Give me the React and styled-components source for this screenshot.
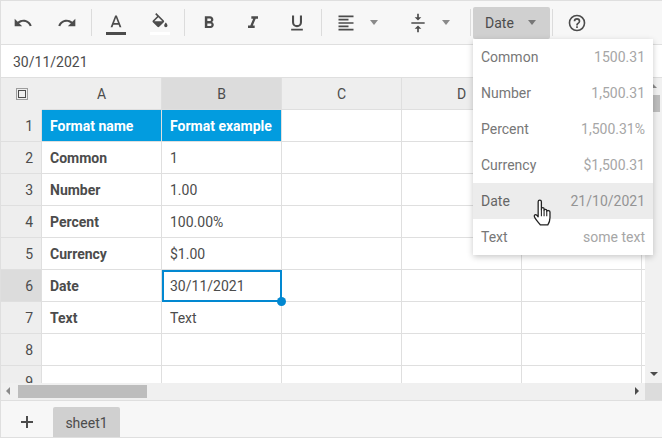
import React from 'react';
import styled, { createGlobalStyle } from 'styled-components';

const GlobalStyle = createGlobalStyle`
  html, body {
    margin: 0;
    padding: 0;
    background: #fff;
  }
  * {
    box-sizing: border-box;
  }
`;

const LINE = '#dfdfdf';
const TEXT = '#4c4c4c';

const Page = styled.div`
  position: relative;
  width: 662px;
  height: 438px;
  display: flex;
  flex-direction: column;
  overflow: hidden;
  border-top: 1px solid ${LINE};
  border-left: 1px solid ${LINE};
  border-bottom: 1px solid ${LINE};
  font-family: Roboto, "Liberation Sans", sans-serif;
  font-size: 14px;
  color: ${TEXT};
`;

const Toolbar = styled.div`
  flex: none;
  height: 44px;
  display: flex;
  align-items: center;
  background: #f7f7f7;
  border-bottom: 1px solid ${LINE};
`;

const Separator = styled.div`
  width: 1px;
  height: 27px;
  margin: 0 2px;
  background: #dcdcdc;
`;

const ToolButton = styled.div`
  position: relative;
  flex: none;
  width: 44px;
  height: 43px;
  display: flex;
  align-items: center;
  justify-content: center;
`;

const DropButton = styled.div`
  flex: none;
  height: 43px;
  display: flex;
  align-items: center;
  gap: 14px;
  margin-left: ${(p) => p.$offset || 0}px;
  padding: 0 ${(p) => p.$right}px 0 12px;
`;

const Caret = styled.span`
  flex: none;
  width: 0;
  height: 0;
  border-left: 4px solid transparent;
  border-right: 4px solid transparent;
  border-top: 5px solid ${(p) => p.$color || '#8a8a8a'};
`;

const FormatButton = styled.div`
  flex: none;
  width: 77px;
  height: 32px;
  padding: 0 14px 0 12px;
  display: flex;
  align-items: center;
  justify-content: space-between;
  background: #d0d0d0;
  border-radius: 2px;
`;

const ColorBar = styled.span`
  position: absolute;
  left: 12px;
  top: 31px;
  width: 20px;
  height: 3px;
  background: ${(p) => p.$color};
`;

const FormulaBar = styled.div`
  flex: none;
  height: 33px;
  padding: 1px 12px 0;
  display: flex;
  align-items: center;
  background: #fff;
  border-bottom: 1px solid ${LINE};
`;

const Sheet = styled.div`
  flex: none;
  height: 323px;
  display: flex;
  flex-direction: column;
  border-bottom: 1px solid ${LINE};
`;

const SheetMain = styled.div`
  flex: none;
  height: 305px;
  display: flex;
`;

const Grid = styled.div`
  flex: 1;
  min-width: 0;
  overflow: hidden;
  display: grid;
  grid-template-columns: 41px repeat(6, 120px);
  grid-auto-rows: 32px;
  align-content: start;
`;

const Corner = styled.div`
  display: flex;
  align-items: center;
  justify-content: center;
  padding-bottom: 1px;
  background: #eeeeee;
`;

const ColHeader = styled.div`
  display: flex;
  align-items: center;
  justify-content: center;
  background: ${(p) => (p.$active ? '#dcdcdc' : '#eeeeee')};
  border-right: 1px solid ${LINE};
  border-bottom: 1px solid ${LINE};
`;

const RowHeader = styled.div`
  display: flex;
  align-items: center;
  justify-content: flex-end;
  padding-right: 8px;
  background: ${(p) => (p.$active ? '#dcdcdc' : '#eeeeee')};
  border-right: 1px solid ${LINE};
  border-bottom: 1px solid ${LINE};
`;

const Cell = styled.div`
  position: relative;
  display: flex;
  align-items: center;
  padding: 0 8px;
  white-space: nowrap;
  border-right: 1px solid ${LINE};
  border-bottom: 1px solid ${LINE};
  font-weight: ${(p) => (p.$bold || p.$head ? 700 : 400)};
  background: ${(p) => (p.$head ? '#029cdf' : '#fff')};
  color: ${(p) => (p.$head ? '#fff' : TEXT)};
`;

const SelectionFrame = styled.span`
  position: absolute;
  inset: 0 -1px -1px 0;
  border: 2px solid #0288d1;
  pointer-events: none;
`;

const SelectionHandle = styled.span`
  position: absolute;
  right: -5px;
  bottom: -5px;
  z-index: 2;
  width: 9px;
  height: 9px;
  border-radius: 50%;
  background: #0288d1;
`;

const VScroll = styled.div`
  position: relative;
  flex: none;
  width: 17px;
  background: #f1f1f1;
`;

const VThumb = styled.div`
  position: absolute;
  left: 1px;
  top: 17px;
  width: 14px;
  height: 17px;
  background: #bdbdbd;
`;

const HScroll = styled.div`
  flex: none;
  height: 17px;
  display: flex;
  background: #f0f0f0;
`;

const HTrack = styled.div`
  position: relative;
  flex: 1;
`;

const HThumb = styled.div`
  position: absolute;
  left: 17px;
  top: 2px;
  width: 129px;
  height: 13px;
  background: #bdbdbd;
`;

const ScrollCorner = styled.div`
  flex: none;
  width: 17px;
  background: #dcdcdc;
`;

const Arrow = styled.span`
  position: absolute;
  width: 0;
  height: 0;
  ${(p) => p.$at}
`;

const TabBar = styled.div`
  flex: 1;
  display: flex;
  align-items: flex-end;
  background: #f7f7f7;
`;

const AddTab = styled.div`
  flex: none;
  width: 52px;
  height: 30px;
  display: flex;
  align-items: center;
  justify-content: center;
`;

const Tab = styled.div`
  flex: none;
  width: 67px;
  height: 30px;
  padding-top: 2px;
  display: flex;
  align-items: center;
  justify-content: center;
  background: #d0d0d0;
  border-radius: 2px 2px 0 0;
`;

const Menu = styled.div`
  position: absolute;
  left: 472px;
  top: 38px;
  z-index: 5;
  width: 180px;
  background: #fff;
  border-radius: 2px;
  box-shadow: 0 2px 6px rgba(0, 0, 0, 0.22);
`;

const MenuItem = styled.div`
  height: 36px;
  padding: 0 8px;
  display: flex;
  align-items: center;
  justify-content: space-between;
  color: ${(p) => (p.$active ? '#666666' : '#777777')};
  background: ${(p) => (p.$active ? '#ececec' : '#fff')};
`;

const MenuValue = styled.span`
  color: ${(p) => (p.$active ? '#949494' : '#a6a6a6')};
`;

const HandCursor = styled.svg`
  position: absolute;
  left: 531px;
  top: 197px;
  z-index: 6;
`;

const ICONS = {
  undo: 'M12.5,8C9.85,8 7.45,9 5.6,10.6L2,7V16H11L7.38,12.38C8.77,11.22 10.54,10.5 12.5,10.5C16.04,10.5 19.05,12.81 20.1,16L22.47,15.22C21.08,11.03 17.15,8 12.5,8Z',
  redo: 'M18.4,10.6C16.55,9 14.15,8 11.5,8C6.85,8 2.92,11.03 1.54,15.22L3.9,16C4.95,12.81 7.95,10.5 11.5,10.5C13.45,10.5 15.23,11.22 16.62,12.38L13,16H22V7L18.4,10.6Z',
  color: 'M9.62,12L12,5.67L14.38,12M11,3L5.5,17H7.75L8.87,14H15.12L16.25,17H18.5L13,3H11Z',
  fill: 'M19,11.5C19,11.5 17,13.67 17,15A2,2 0 0,0 19,17A2,2 0 0,0 21,15C21,13.67 19,11.5 19,11.5M5.21,10L10,5.21L14.79,10M16.56,8.94L7.62,0L6.21,1.41L8.59,3.79L3.44,8.94C2.85,9.5 2.85,10.47 3.44,11.06L8.94,16.56C9.23,16.85 9.62,17 10,17C10.38,17 10.77,16.85 11.06,16.56L16.56,11.06C17.15,10.47 17.15,9.5 16.56,8.94Z',
  bold: 'M13.5,15.5H10V12.5H13.5A1.5,1.5 0 0,1 15,14A1.5,1.5 0 0,1 13.5,15.5M10,6.5H13A1.5,1.5 0 0,1 14.5,8A1.5,1.5 0 0,1 13,9.5H10M15.6,10.79C16.57,10.11 17.25,9 17.25,8C17.25,5.74 15.5,4 13.25,4H7V18H14.04C16.14,18 17.75,16.3 17.75,14.21C17.75,12.69 16.89,11.39 15.6,10.79Z',
  italic: 'M10,4V7H12.21L8.79,15H6V18H14V15H11.79L15.21,7H18V4H10Z',
  underline: 'M5,21H19V19H5V21M12,17A6,6 0 0,0 18,11V3H15.5V11A3.5,3.5 0 0,1 12,14.5A3.5,3.5 0 0,1 8.5,11V3H6V11A6,6 0 0,0 12,17Z',
  align: 'M3,3H21V5H3V3M3,7H15V9H3V7M3,11H21V13H3V11M3,15H15V17H3V15M3,19H21V21H3V19Z',
  valign: 'M8,19H11V23H13V19H16L12,15L8,19M16,5H13V1H11V5H8L12,9L16,5M4,11V13H20V11H4Z',
  help: 'M11,18H13V16H11V18M12,2A10,10 0 0,0 2,12A10,10 0 0,0 12,22A10,10 0 0,0 22,12A10,10 0 0,0 12,2M12,20C7.59,20 4,16.41 4,12C4,7.59 7.59,4 12,4C16.41,4 20,7.59 20,12C20,16.41 16.41,20 12,20M12,6A4,4 0 0,0 8,10H10A2,2 0 0,1 12,8A2,2 0 0,1 14,10C14,12 11,11.75 11,15H13C13,12.75 16,12.5 16,10A4,4 0 0,0 12,6Z',
};

const Icon = ({ name }) => (
  <svg width="20" height="20" viewBox="0 0 24 24" fill={TEXT}>
    <path d={ICONS[name]} />
  </svg>
);

const SelectAllIcon = () => (
  <svg width="12" height="12" viewBox="0 0 12 12" fill="none" stroke={TEXT}>
    <rect x="0.5" y="0.5" width="11" height="11" strokeDasharray="1 1" />
    <rect x="2.5" y="2.5" width="7" height="7" />
  </svg>
);

const PlusIcon = () => (
  <svg width="12" height="12" viewBox="0 0 12 12" fill={TEXT}>
    <path d="M5 0h2v5h5v2H7v5H5V7H0V5h5z" />
  </svg>
);

// the sixth column only peeks out under the scrollbar, so its header stays empty
const COLUMNS = ['A', 'B', 'C', 'D', 'E', ''];

const ROWS = [
  ['Format name', 'Format example'],
  ['Common', '1'],
  ['Number', '1.00'],
  ['Percent', '100.00%'],
  ['Currency', '$1.00'],
  ['Date', '30/11/2021'],
  ['Text', 'Text'],
  ['', ''],
  ['', ''],
];

const FORMATS = [
  ['Common', '1500.31'],
  ['Number', '1,500.31'],
  ['Percent', '1,500.31%'],
  ['Currency', '$1,500.31'],
  ['Date', '21/10/2021'],
  ['Text', 'some text'],
];

const App = () => {
  return (
    <Page>
      <GlobalStyle />
      <Toolbar>
        <ToolButton><Icon name="undo" /></ToolButton>
        <ToolButton><Icon name="redo" /></ToolButton>
        <Separator />
        <ToolButton>
          <Icon name="color" />
          <ColorBar $color={TEXT} />
        </ToolButton>
        <ToolButton>
          <Icon name="fill" />
          <ColorBar $color="#fff" />
        </ToolButton>
        <Separator />
        <ToolButton><Icon name="bold" /></ToolButton>
        <ToolButton><Icon name="italic" /></ToolButton>
        <ToolButton><Icon name="underline" /></ToolButton>
        <Separator />
        <DropButton $right={12}><Icon name="align" /><Caret /></DropButton>
        <DropButton $right={18} $offset={6}><Icon name="valign" /><Caret /></DropButton>
        <Separator />
        <FormatButton>Date<Caret $color="#777777" /></FormatButton>
        <Separator />
        <ToolButton><Icon name="help" /></ToolButton>
      </Toolbar>

      <FormulaBar>30/11/2021</FormulaBar>

      <Sheet>
        <SheetMain>
          <Grid>
            <Corner><SelectAllIcon /></Corner>
            {COLUMNS.map((col) => (
              <ColHeader key={col} $active={col === 'B'}>{col}</ColHeader>
            ))}
            {ROWS.map((row, i) => (
              <React.Fragment key={i}>
                <RowHeader $active={i === 5}>{i + 1}</RowHeader>
                <Cell $head={i === 0} $bold>{row[0]}</Cell>
                <Cell $head={i === 0}>
                  {row[1]}
                  {i === 5 && <SelectionFrame />}
                  {i === 5 && <SelectionHandle />}
                </Cell>
                <Cell /><Cell /><Cell /><Cell />
              </React.Fragment>
            ))}
          </Grid>
          <VScroll>
            <VThumb />
            <Arrow $at="left: 4px; top: 6px; border-left: 4px solid transparent; border-right: 4px solid transparent; border-bottom: 4px solid #8a8a8a;" />
            <Arrow $at="left: 5px; bottom: 7px; border-left: 4px solid transparent; border-right: 4px solid transparent; border-top: 4px solid #4c4c4c;" />
          </VScroll>
        </SheetMain>
        <HScroll>
          <HTrack>
            <HThumb />
            <Arrow $at="left: 5px; top: 4px; border-top: 4px solid transparent; border-bottom: 4px solid transparent; border-right: 4px solid #8a8a8a;" />
            <Arrow $at="right: 6px; top: 4px; border-top: 4px solid transparent; border-bottom: 4px solid transparent; border-left: 4px solid #4c4c4c;" />
          </HTrack>
          <ScrollCorner />
        </HScroll>
      </Sheet>

      <TabBar>
        <AddTab><PlusIcon /></AddTab>
        <Tab>sheet1</Tab>
      </TabBar>

      <Menu>
        {FORMATS.map(([label, value]) => (
          <MenuItem key={label} $active={label === 'Date'}>
            <span>{label}</span>
            <MenuValue $active={label === 'Date'}>{value}</MenuValue>
          </MenuItem>
        ))}
      </Menu>

      <HandCursor width="22" height="29" viewBox="0 0 20 27">
        <path
          d="M5.5 3.5C5.5 1.5 8.5 1.5 8.5 3.5V11V10C8.5 8.5 11 8.5 11 10V11.5C11 10.2 13.5 10.2 13.5 11.7V12.5C13.5 11.3 16.5 11.3 16.5 13V18.5C16.5 21.5 15.5 23.5 14.5 25H7.5C6 23 4 21 2.5 18.5C1.5 17 1.8 15.5 3 15.5C4 15.5 4.8 16.5 5.5 17.5Z"
          fill="#fff"
          stroke="#222"
          strokeWidth="1.2"
          strokeLinejoin="round"
        />
        <path d="M8.5 11V17M11 11.5V17M13.5 12.5V17" fill="none" stroke="#222" strokeWidth="1" />
      </HandCursor>
    </Page>
  );
};

export default App;
